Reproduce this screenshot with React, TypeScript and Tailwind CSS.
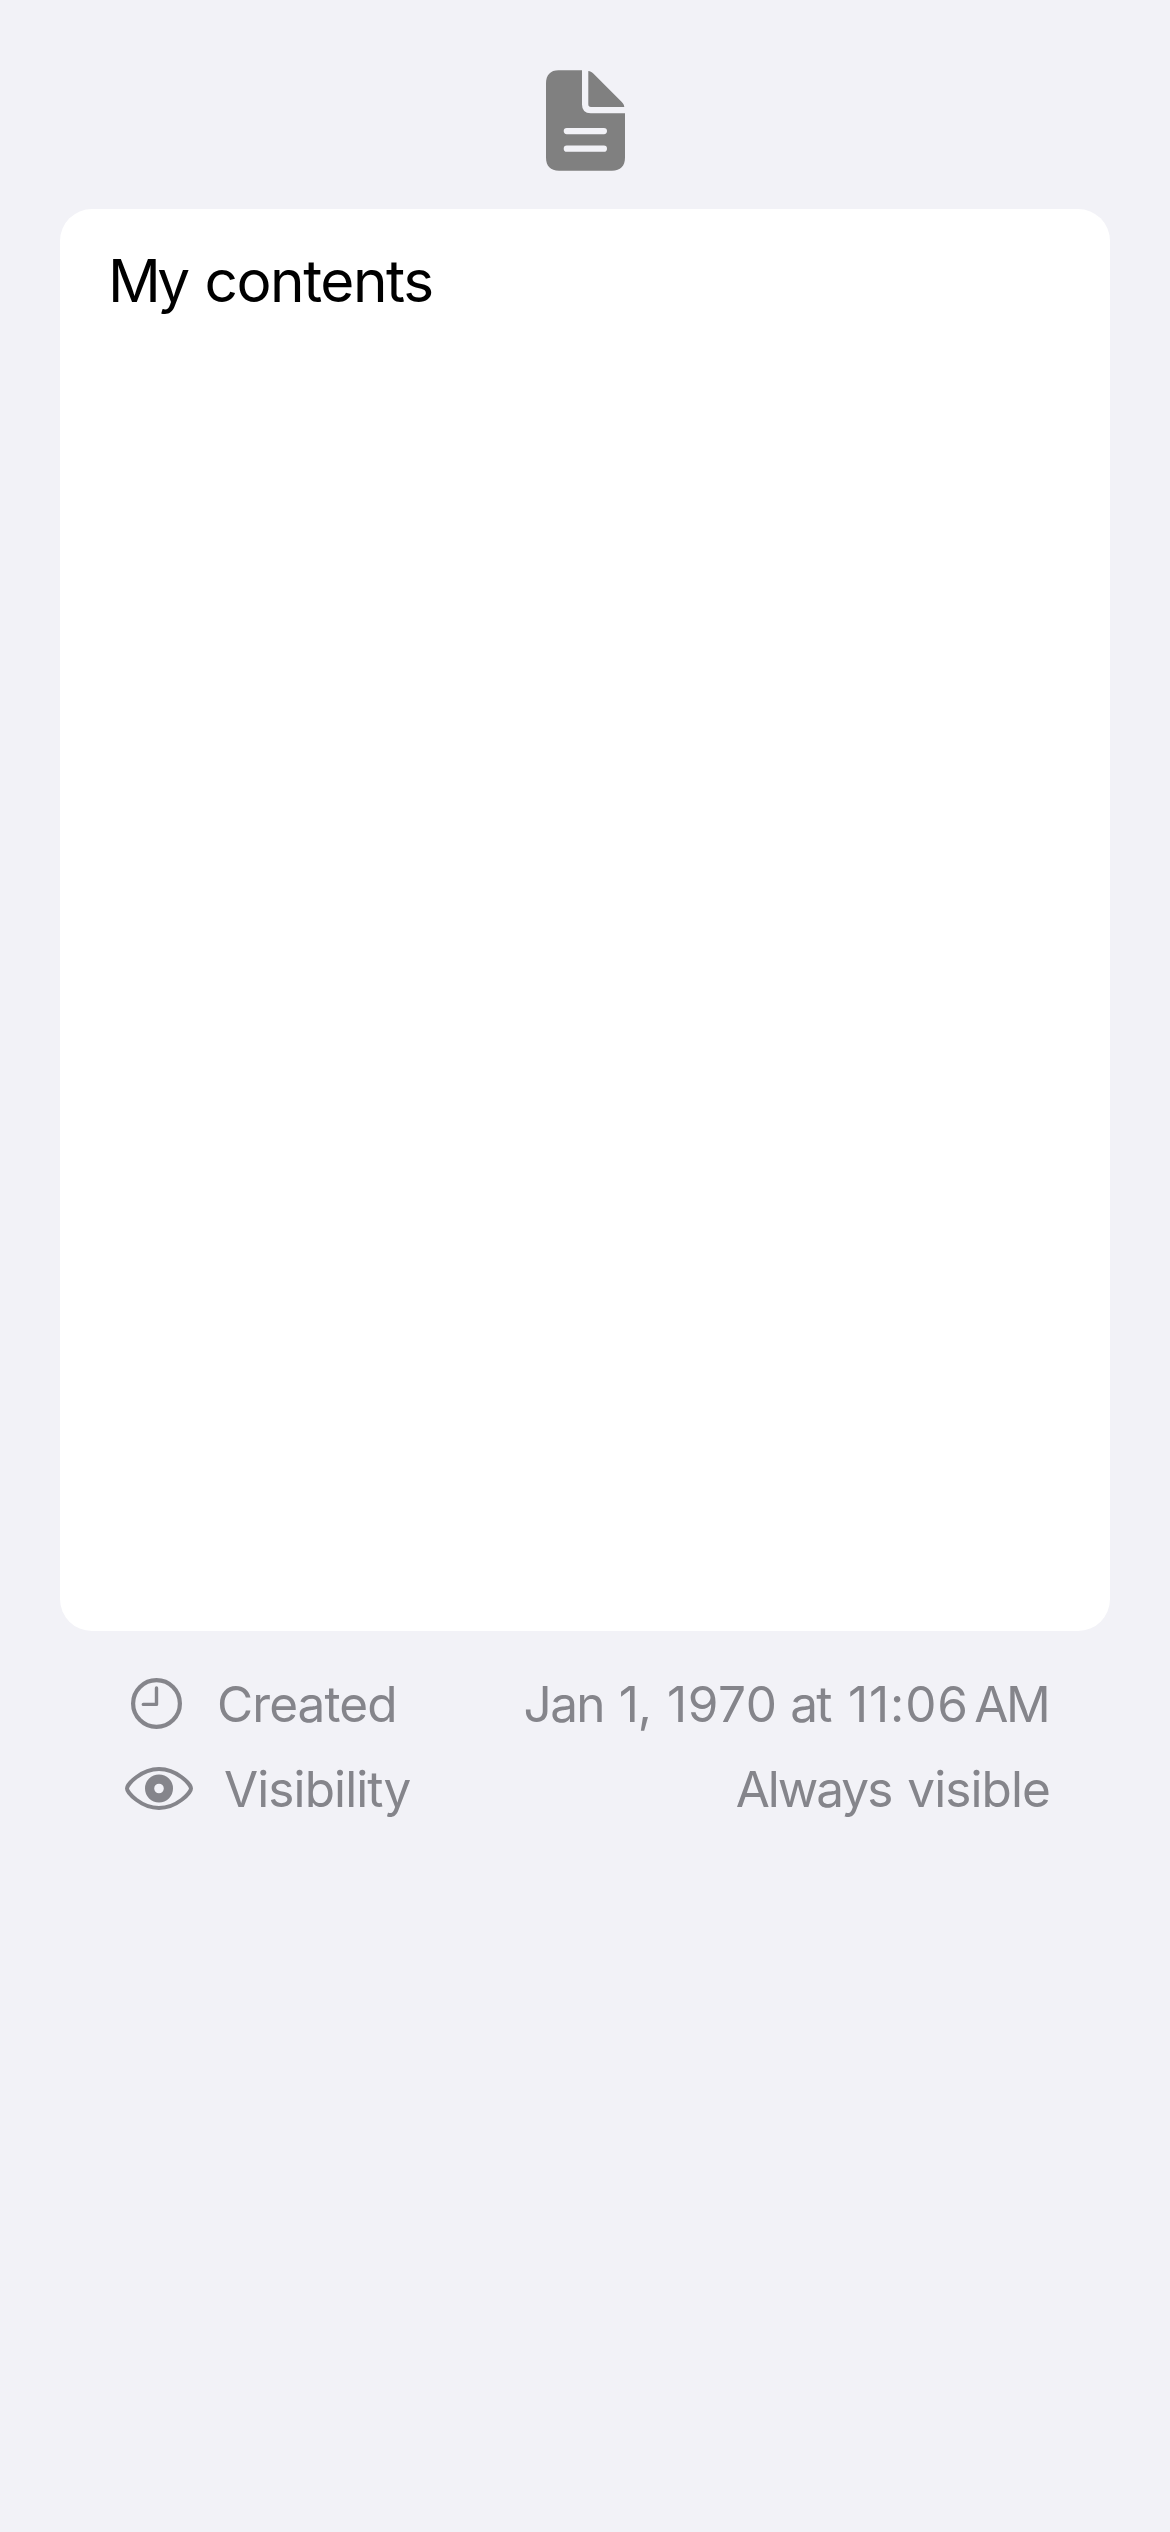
export default function App() {
  return (
    <main className="flex h-[2532px] w-[1170px] flex-col bg-[#f2f2f7] font-['Inter',sans-serif]">
      <div className="flex h-[209px] justify-center pt-[70px]">
        <svg width="80" height="101" viewBox="0 0 80 101" fill="#808080">
          <path d="M13.5 0.3H37V34.5Q37 43.2 45.7 43.2H80V87.5C80 96 75.500 100.700 67 100.700H14C5.500 100.700 1 96 1 87.500V13.500C1 5 5.500 0.300 13.500 0.300Z" />
          <path d="M43.300 0.900C45.100 0.900 46.700 2 48.300 3.600L76.500 31.700C78.200 33.400 79.200 34.700 79.300 37H46Q43.300 37 43.300 34.300Z" />
          <path d="M21.800 61.100H58.900M21.800 78.700H58.900" stroke="#f2f2f7" strokeWidth="6.2" strokeLinecap="round" />
        </svg>
      </div>
      <section className="mx-[60px] h-[1422px] rounded-[32px] bg-white pt-[36px] pl-[48px] text-[58.5px] leading-[72px] text-black">
        <span className="tracking-[-4px]">My</span>{" "}
        <span className="ml-[2px] tracking-[-1.45px]">contents</span>
      </section>
      <footer className="flex flex-col pt-[30px] text-[49.5px] leading-[60px] text-[#85858b]">
        <div className="flex h-[85px] items-center pr-[122px] pl-[130px]">
          <svg width="53" height="53" viewBox="0 0 53 53" fill="none" stroke="#85858b" strokeLinecap="round" strokeLinejoin="round">
            <circle cx="26.5" cy="26.5" r="23.4" strokeWidth="4.2" />
            <path d="M26.5 11V27.400H13.300" strokeWidth="3.4" />
          </svg>
          <span className="ml-[34px] pt-px tracking-[-0.9px]">Created</span>
          <span className="ml-auto pt-px whitespace-nowrap">
            <span className="tracking-[-1.7px]">Jan</span>{" "}
            <span className="ml-[1px] tracking-[-1px]">1,</span>{" "}
            <span className="ml-[2px] tracking-[0.5px]">1970</span>{" "}
            <span className="ml-[-1px] tracking-[-1.9px]">at</span>{" "}
            <span className="ml-[3.5px] tracking-[0.9px]">11:06</span>{" "}
            <span className="ml-[-8.5px] tracking-[-2.6px]">AM</span>
          </span>
        </div>
        <div className="flex h-[85px] items-center pr-[120px] pl-[124px]">
          <svg width="70" height="45" viewBox="0 0 70 45" fill="none" stroke="#85858b" strokeWidth="4">
            <path d="M3 22.500C3 18.500 17 3 35 3S67 18.500 67 22.500S53 42 35 42S3 26.500 3 22.500Z" />
            <circle cx="35" cy="22.500" r="9.4" strokeWidth="9.2" />
          </svg>
          <span className="ml-[30px] pt-px tracking-[-0.9px]">Visibility</span>
          <span className="ml-auto pt-px whitespace-nowrap">
            <span className="tracking-[-2px]">Always</span>{" "}
            <span className="ml-[2px] tracking-[-0.9px]">visible</span>
          </span>
        </div>
      </footer>
    </main>
  );
}
